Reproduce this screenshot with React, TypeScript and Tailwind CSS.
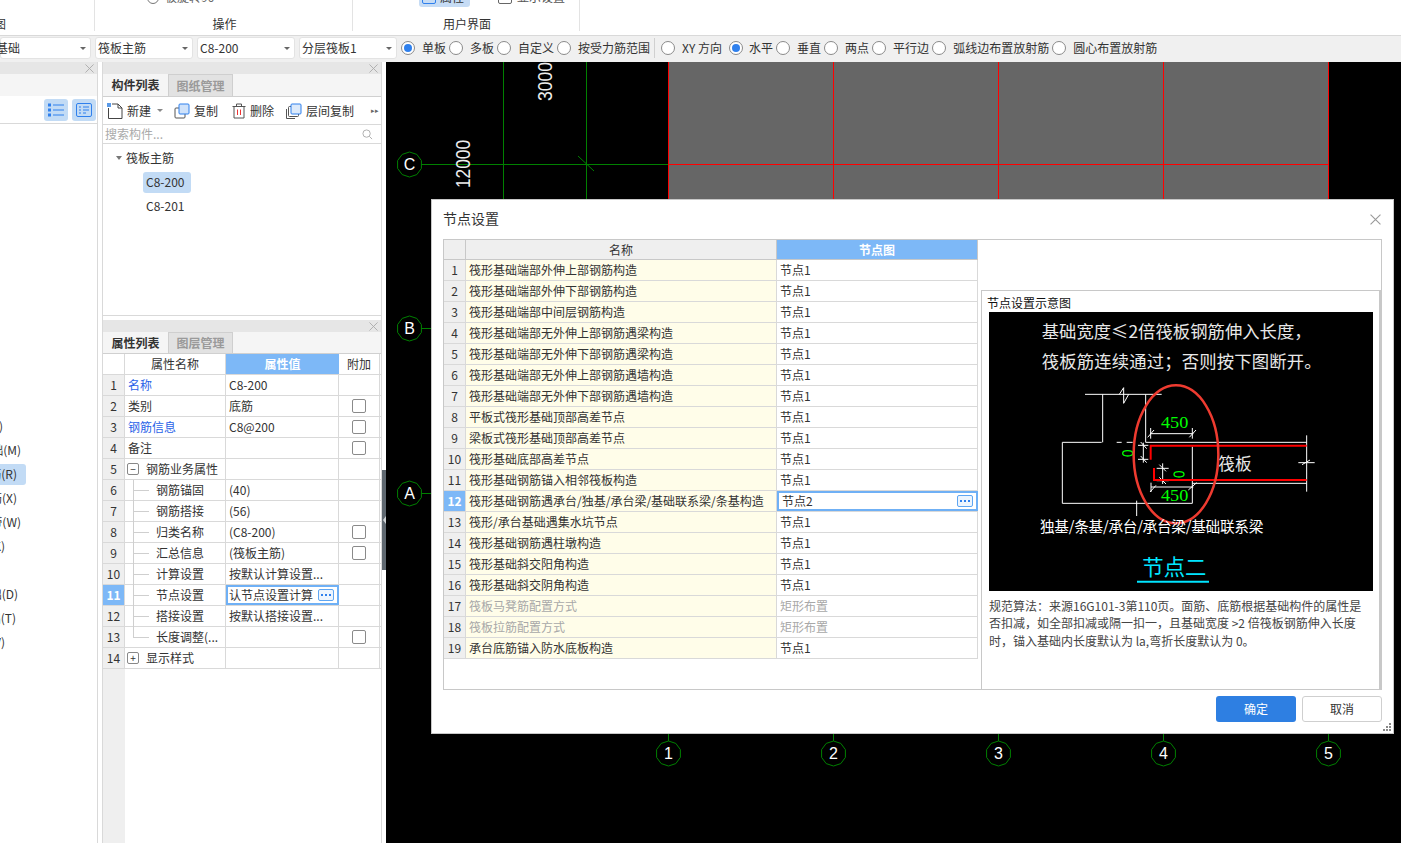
import React from "react";

function Radio({ on }: { on?: boolean }) {
  return (
    <span className="flex h-[14px] w-[14px] shrink-0 items-center justify-center rounded-full border border-[#8a8a8a] bg-white">
      {on && <span className="h-[8px] w-[8px] rounded-full bg-[#2f80ed]" />}
    </span>
  );
}

function RadioItem({ label, on, className = "" }: { label: string; on?: boolean; className?: string }) {
  return (
    <div className="flex items-center gap-[7px]">
      <Radio on={on} />
      <span className={`whitespace-nowrap ${className}`}>{label}</span>
    </div>
  );
}

function Select({ label, className, labelClass = "" }: { label: string; className: string; labelClass?: string }) {
  return (
    <div className={`flex h-[22px] shrink-0 items-center justify-between rounded-[3px] border border-[#e3e3e3] bg-white px-[2px] ${className}`}>
      <span className={`whitespace-nowrap ${labelClass}`}>{label}</span>
      <span className="mr-[2px] h-0 w-0 border-x-[3px] border-t-[3px] border-x-transparent border-t-[#666]" />
    </div>
  );
}

function Dots() {
  return (
    <span className="flex h-[12px] w-[16px] shrink-0 items-center justify-center gap-[2px] rounded-[2px] border border-[#5fa6f2] bg-[#edf5fe]">
      <span className="h-[2px] w-[2px] bg-[#2f80ed]" />
      <span className="h-[2px] w-[2px] bg-[#2f80ed]" />
      <span className="h-[2px] w-[2px] bg-[#2f80ed]" />
    </span>
  );
}

function CloseX({ size = 9, color = "#aaa" }: { size?: number; color?: string }) {
  return (
    <svg width={size} height={size} viewBox="0 0 10 10" className="shrink-0">
      <path d="M0.5 0.5L9.5 9.5M9.5 0.5L0.5 9.5" stroke={color} strokeWidth="1" fill="none" />
    </svg>
  );
}

function PanelHeader() {
  return (
    <div className="flex h-[12px] shrink-0 items-center justify-end bg-[#e6e6e6] pr-[3px]">
      <CloseX />
    </div>
  );
}

function Tabs({ a, b, className }: { a: string; b: string; className: string }) {
  return (
    <div className={`flex shrink-0 border-b border-[#d0d0d0] bg-[#f5f5f5] ${className}`}>
      <div className="flex w-[65px] items-center justify-center font-bold text-[#333]">{a}</div>
      <div className="flex w-[65px] items-center justify-center border-x border-t border-[#cfcfcf] bg-[#e2e2e2] font-bold text-[#9a9a9a]">{b}</div>
    </div>
  );
}

function ToolBtn({ icon, label, className }: { icon: React.ReactNode; label: string; className: string }) {
  return (
    <div className={`flex items-center gap-[4px] ${className}`}>
      {icon}
      <span className="whitespace-nowrap">{label}</span>
    </div>
  );
}

const leftRows: { t: string; w: string; sel?: boolean }[] = [
  { t: "基础梁(F)", w: "w-[3px]" },
  { t: "筏板基础(M)", w: "w-[21px]" },
  { t: "筏板主筋(R)", w: "w-[17px]", sel: true },
  { t: "筏板负筋(X)", w: "w-[17px]" },
  { t: "基础板带(W)", w: "w-[21px]" },
  { t: "集水坑(K)", w: "w-[5px]" },
  { t: "", w: "w-0" },
  { t: "独立基础(D)", w: "w-[18px]" },
  { t: "条形基础(T)", w: "w-[16px]" },
  { t: "桩承台(V)", w: "w-[5px]" },
];

type P = { name: string; val?: string; blue?: boolean; chk?: boolean; tree?: "mid" | "last"; box?: "-" | "+"; active?: boolean };
const props: P[] = [
  { name: "名称", val: "C8-200", blue: true },
  { name: "类别", val: "底筋", chk: true },
  { name: "钢筋信息", val: "C8@200", blue: true, chk: true },
  { name: "备注", chk: true },
  { name: "钢筋业务属性", box: "-" },
  { name: "钢筋锚固", val: "(40)", tree: "mid" },
  { name: "钢筋搭接", val: "(56)", tree: "mid" },
  { name: "归类名称", val: "(C8-200)", tree: "mid", chk: true },
  { name: "汇总信息", val: "(筏板主筋)", tree: "mid", chk: true },
  { name: "计算设置", val: "按默认计算设置...", tree: "mid" },
  { name: "节点设置", val: "认节点设置计算", tree: "mid", active: true },
  { name: "搭接设置", val: "按默认搭接设置...", tree: "mid" },
  { name: "长度调整(...", tree: "last", chk: true },
  { name: "显示样式", box: "+" },
];

function PropRow({ p, i }: { p: P; i: number }) {
  return (
    <div className="flex h-[21px] shrink-0 border-b border-[#d9d9d9]">
      <div className={`flex w-[22px] shrink-0 items-center justify-center border-r border-[#d9d9d9] ${p.active ? "bg-[#7db8f7] font-bold text-white" : "bg-[#efefef]"}`}>{i + 1}</div>
      <div className="relative flex w-[101px] shrink-0 items-center border-r border-[#d9d9d9]">
        {p.tree && (
          <>
            <span className={`absolute left-[8px] top-0 w-px bg-[#cfcfcf] ${p.tree === "last" ? "h-[10px]" : "h-[21px]"}`} />
            <span className="absolute left-[8px] top-[10px] h-px w-[16px] bg-[#cfcfcf]" />
          </>
        )}
        {p.box && (
          <span className="ml-[2px] mr-[7px] flex h-[12px] w-[12px] items-center justify-center rounded-[2px] border border-[#888] text-[10px] leading-none">{p.box === "-" ? "−" : "+"}</span>
        )}
        <span className={`whitespace-nowrap ${p.tree ? "pl-[31px]" : p.box ? "" : "pl-[3px]"} ${p.blue ? "text-[#2a63e8]" : ""}`}>{p.name}</span>
      </div>
      {p.active ? (
        <div className="flex w-[113px] shrink-0 items-center justify-between border-2 border-[#6fb0f5] pl-[1px] pr-[3px]">
          <span className="whitespace-nowrap">{p.val}</span>
          <Dots />
        </div>
      ) : (
        <div className="flex w-[113px] shrink-0 items-center overflow-hidden whitespace-nowrap border-r border-[#d9d9d9] pl-[3px]">{p.val}</div>
      )}
      <div className="flex w-[41px] shrink-0 items-center justify-center border-r border-[#d9d9d9]">
        {p.chk && <span className="h-[14px] w-[14px] rounded-[2px] border border-[#8a8a8a] bg-white" />}
      </div>
    </div>
  );
}

const nodes: { n: string; v: string; off?: boolean; active?: boolean }[] = [
  { n: "筏形基础端部外伸上部钢筋构造", v: "节点1" },
  { n: "筏形基础端部外伸下部钢筋构造", v: "节点1" },
  { n: "筏形基础端部中间层钢筋构造", v: "节点1" },
  { n: "筏形基础端部无外伸上部钢筋遇梁构造", v: "节点1" },
  { n: "筏形基础端部无外伸下部钢筋遇梁构造", v: "节点1" },
  { n: "筏形基础端部无外伸上部钢筋遇墙构造", v: "节点1" },
  { n: "筏形基础端部无外伸下部钢筋遇墙构造", v: "节点1" },
  { n: "平板式筏形基础顶部高差节点", v: "节点1" },
  { n: "梁板式筏形基础顶部高差节点", v: "节点1" },
  { n: "筏形基础底部高差节点", v: "节点1" },
  { n: "筏形基础钢筋锚入相邻筏板构造", v: "节点1" },
  { n: "筏形基础钢筋遇承台/独基/承台梁/基础联系梁/条基构造", v: "节点2", active: true },
  { n: "筏形/承台基础遇集水坑节点", v: "节点1" },
  { n: "筏形基础钢筋遇柱墩构造", v: "节点1" },
  { n: "筏形基础斜交阳角构造", v: "节点1" },
  { n: "筏形基础斜交阴角构造", v: "节点1" },
  { n: "筏板马凳筋配置方式", v: "矩形布置", off: true },
  { n: "筏板拉筋配置方式", v: "矩形布置", off: true },
  { n: "承台底筋锚入防水底板构造", v: "节点1" },
];

function Axis({ x, y, t }: { x: number; y: number; t: string }) {
  const pts = Array.from({ length: 10 }, (_, i) => {
    const a = (i / 10) * Math.PI * 2 + Math.PI / 10;
    return `${(x + 0.5 + 12.5 * Math.cos(a)).toFixed(1)},${(y + 0.5 + 12.5 * Math.sin(a)).toFixed(1)}`;
  }).join(" ");
  return (
    <g>
      <polygon points={pts} fill="none" stroke="#008000" strokeWidth="1" />
      <text x={x + 0.5} y={y + 6} textAnchor="middle" fill="#fff" fontSize="16" fontFamily="Liberation Sans, sans-serif">{t}</text>
    </g>
  );
}

function Canvas() {
  const reds = [668, 833, 998, 1163, 1328];
  return (
    <svg width="1015" height="781" viewBox="386 62 1015 781" className="block">
      <rect x="386" y="62" width="1015" height="781" fill="#000" />
      <rect x="668" y="62" width="660" height="440" fill="#666" />
      {[164, 328, 493].map((y) => (
        <rect key={y} x="421" y={y} width="247" height="1" fill="#008000" />
      ))}
      {[503, 586].map((x) => (
        <rect key={x} x={x} y="62" width="1" height="440" fill="#008000" />
      ))}
      <line x1="578" y1="156" x2="594" y2="171" stroke="#008000" />
      {reds.map((x) => (
        <rect key={x} x={x} y="62" width="1" height="440" fill="#f00" />
      ))}
      <rect x="668" y="164" width="660" height="1" fill="#f00" />
      <text transform="translate(552 101) rotate(-90)" fill="#eee" fontSize="20" textLength="39" lengthAdjust="spacingAndGlyphs" fontFamily="Liberation Sans, sans-serif">3000</text>
      <text transform="translate(470 188) rotate(-90)" fill="#eee" fontSize="20" textLength="48" lengthAdjust="spacingAndGlyphs" fontFamily="Liberation Sans, sans-serif">12000</text>
      <Axis x={409} y={164} t="C" />
      <Axis x={409} y={328} t="B" />
      <Axis x={409} y={493} t="A" />
      {reds.map((x, i) => (
        <g key={x}>
          <rect x={x} y="734" width="1" height="7" fill="#008000" />
          <Axis x={x} y={753} t={String(i + 1)} />
        </g>
      ))}
    </svg>
  );
}

function Diagram() {
  const cad = "Noto Sans CJK SC, sans-serif";
  const whites = [
    "M315 313H545",
    "M418 313L431 293V340L446 313",
    "M368 313V457",
    "M497 313V457",
    "M247 457H365M410 457H425M440 457H458M497 457H980",
    "M247 457V640H637V470",
    "M980 436V605",
    "M637 580H980",
    "M470 632V678",
    "M512 414V446M637 414V446M510 431H640M503 442L522 420M628 442L648 420",
    "M490 458V518M474 466H505M474 508H505M482 456L500 476M482 498L500 518",
    "M548 520V582M530 535H566M530 572H566M538 524L558 544M538 562L558 582",
    "M513 591H640M513 578V606M510 606L528 586M625 600L650 578",
    "M955 518H1004M966 524L990 510",
  ];
  return (
    <svg width="384" height="279" viewBox="27 66 1152 837" className="block shrink-0">
      <rect x="27" y="66" width="1152" height="837" fill="#000" />
      <text x="185" y="145" fill="#e8e8e8" fontSize="52" fontFamily={cad} textLength="810">{"基础宽度≤2倍筏板钢筋伸入长度\uFF0C"}</text>
      <text x="185" y="235" fill="#e8e8e8" fontSize="52" fontFamily={cad} textLength="840">{"筏板筋连续通过\uFF1B否则按下图断开。"}</text>
      {whites.map((d, i) => (
        <path key={i} d={d} stroke="#fff" strokeWidth="3" fill="none" />
      ))}
      <path d="M980 467H512V509M980 570H522V534" stroke="#f00" strokeWidth="6" fill="none" />
      <text x="543" y="413" fill="#0f0" fontSize="48" fontFamily="Liberation Serif, serif" textLength="82" lengthAdjust="spacingAndGlyphs">450</text>
      <text x="543" y="632" fill="#0f0" fontSize="48" fontFamily="Liberation Serif, serif" textLength="82" lengthAdjust="spacingAndGlyphs">450</text>
      <ellipse cx="443" cy="490" rx="15" ry="8" fill="none" stroke="#0f0" strokeWidth="4" />
      <ellipse cx="597" cy="553" rx="15" ry="8" fill="none" stroke="#0f0" strokeWidth="4" />
      <text x="715" y="540" fill="#e8e8e8" fontSize="50" fontFamily={cad}>筏板</text>
      <ellipse cx="588" cy="493" rx="127" ry="207" fill="none" stroke="#ee3b30" strokeWidth="7.5" />
      <text x="180" y="725" fill="#fff" fontSize="44" fontFamily={cad} textLength="670">独基/条基/承台/承台梁/基础联系梁</text>
      <text x="487" y="855" fill="#00e5ff" fontSize="64" fontFamily={cad} textLength="192">节点二</text>
      <line x1="471" x2="687" y1="875" y2="875" stroke="#00e5ff" strokeWidth="6" />
    </svg>
  );
}

function NodeDialog() {
  return (
    <div className="absolute left-[431px] top-[199px] flex h-[535px] w-[963px] flex-col border border-[#c8c8c8] bg-white">
      <div className="flex h-[39px] shrink-0 items-center justify-between pl-[11px] pr-[12px]">
        <span className="mb-[3px] text-[14px] text-[#333]">节点设置</span>
        <CloseX size={11} color="#999" />
      </div>
      <div className="ml-[11px] flex h-[451px] w-[939px] shrink-0 border border-[#c8c8c8]">
        <div className="w-[534px] shrink-0">
          <div className="flex h-[20px] border-b border-[#c8c8c8]">
            <div className="w-[22px] shrink-0 border-r border-[#c8c8c8] bg-[#efefef]" />
            <div className="flex w-[311px] shrink-0 items-center justify-center border-r border-[#c8c8c8] bg-[#efefef]">名称</div>
            <div className="flex w-[201px] shrink-0 items-center justify-center border-r border-[#c8c8c8] bg-[#7db8f7] font-bold text-white">节点图</div>
          </div>
          {nodes.map((r, i) => (
            <div key={i} className={`flex h-[21px] border-b border-[#d9d9d9] ${r.off ? "text-[#a8a8a8]" : ""}`}>
              <div className={`flex w-[22px] shrink-0 items-center justify-center border-r border-[#d9d9d9] ${r.active ? "bg-[#7db8f7] font-bold text-white" : "bg-[#efefef] text-[#333]"}`}>{i + 1}</div>
              <div className="flex w-[311px] shrink-0 items-center whitespace-nowrap border-r border-[#d9d9d9] bg-[#fffde9] pl-[3px]">{r.n}</div>
              {r.active ? (
                <div className="flex w-[201px] shrink-0 items-center justify-between border-2 border-[#6fb0f5] pl-[3px] pr-[3px]">
                  <span>{r.v}</span>
                  <Dots />
                </div>
              ) : (
                <div className="flex w-[201px] shrink-0 items-center border-r border-[#d9d9d9] pl-[3px]">{r.v}</div>
              )}
            </div>
          ))}
        </div>
        <div className="flex min-w-0 flex-1 flex-col pl-[3px]">
          <div className="h-[50px] shrink-0" />
          <div className="flex flex-1 flex-col border-l border-t border-r-2 border-[#c8c8c8] pl-[7px]">
            <div className="-ml-[2px] flex h-[21px] shrink-0 items-center pt-[2px] text-[#111]">节点设置示意图</div>
            <Diagram />
            <div className="mt-[6px] leading-[17.3px] text-[#444]">
              <div className="whitespace-nowrap">{"规范算法\uFF1A来源16G101-3第110页。面筋、底筋根据基础构件的属性是"}</div>
              <div className="whitespace-nowrap">{"否扣减\uFF0C如全部扣减或隔一扣一\uFF0C且基础宽度 >2 倍筏板钢筋伸入长度"}</div>
              <div className="whitespace-nowrap">{"时\uFF0C锚入基础内长度默认为 la,弯折长度默认为 0。"}</div>
            </div>
          </div>
        </div>
      </div>
      <div className="relative mt-[6px] flex justify-end gap-[6px] pr-[11px]">
        <button className="h-[26px] w-[80px] rounded-[3px] bg-[#2e7fe2] text-white">确定</button>
        <button className="h-[26px] w-[80px] rounded-[3px] border border-[#cfcfcf] bg-white text-[#333]">取消</button>
      </div>
      <svg width="8" height="8" viewBox="0 0 8 8" className="absolute bottom-[2px] right-[2px]">
        <rect x="6" y="0" width="2" height="2" fill="#888" />
        <rect x="3" y="3" width="2" height="2" fill="#888" />
        <rect x="6" y="3" width="2" height="2" fill="#888" />
        <rect x="0" y="6" width="2" height="2" fill="#888" />
        <rect x="3" y="6" width="2" height="2" fill="#888" />
        <rect x="6" y="6" width="2" height="2" fill="#888" />
      </svg>
    </div>
  );
}

const iNew = (
  <svg width="16" height="16" viewBox="0 0 16 16" className="shrink-0">
    <path d="M1.5 5V15.5H15V5L11 1H5" fill="none" stroke="#444" />
    <path d="M11 1V5H15" fill="none" stroke="#444" />
    <rect x="0" y="0" width="4" height="4" fill="#5b9be8" />
  </svg>
);
const iCopy = (
  <svg width="16" height="16" viewBox="0 0 16 16" className="shrink-0">
    <rect x="1" y="5" width="10" height="10" rx="1" fill="#fff" stroke="#555" />
    <rect x="5" y="1" width="10" height="10" rx="1" fill="#cfe2fa" stroke="#2f80ed" />
  </svg>
);
const iDel = (
  <svg width="14" height="16" viewBox="0 0 14 16" className="shrink-0">
    <path d="M0.5 3.5H13.5M4.5 3.5V1H9.5V3.5" fill="none" stroke="#555" />
    <path d="M2 3.5V15H12V3.5" fill="none" stroke="#555" />
    <path d="M5.5 6.5V12M8.5 6.5V12" stroke="#e33" />
  </svg>
);
const iFloor = (
  <svg width="16" height="16" viewBox="0 0 16 16" className="shrink-0">
    <path d="M0.5 6V15.5H9" fill="none" stroke="#555" />
    <rect x="2.5" y="3.5" width="10" height="10" rx="1" fill="#fff" stroke="#555" />
    <rect x="5" y="1" width="10" height="10" rx="1" fill="#dceafb" stroke="#2f80ed" />
  </svg>
);

export default function App() {
  return (
    <div className="relative flex h-[843px] w-[1401px] flex-col overflow-hidden bg-white font-['Noto_Sans_CJK_SC',sans-serif] text-[12px] leading-none text-[#333]">
      {/* ribbon */}
      <div className="flex h-[36px] shrink-0 overflow-hidden border-b border-[#d9d9d9]">
        <div className="flex h-[31px] w-[95px] shrink-0 items-end border-r border-[#e3e3e3] pb-[1px]">
          <span className="-ml-[18px] text-[12px]">视图</span>
        </div>
        <div className="flex h-[31px] w-[258px] shrink-0 flex-col border-r border-[#e3e3e3]">
          <div className="flex h-[4px] items-end gap-[6px] pl-[52px]">
            <span className="h-[14px] w-[12px] shrink-0 rounded-full border border-[#777]" />
            <span className="shrink-0 whitespace-nowrap leading-[14px] text-[#666]">板旋转90</span>
          </div>
          <div className="mt-auto pb-[1px] pl-[2px] text-center">操作</div>
        </div>
        <div className="flex h-[31px] w-[227px] shrink-0 flex-col border-r border-[#e3e3e3]">
          <div className="flex h-[7px] items-end pl-[66px]">
            <div className="flex h-[20px] w-[51px] shrink-0 items-center gap-[4px] rounded-[3px] bg-[#c6dcf5] pl-[3px]">
              <span className="h-[14px] w-[14px] shrink-0 rounded-[2px] border border-[#2f80ed]" />
              <span>属性</span>
            </div>
            <div className="ml-[28px] flex h-[21px] shrink-0 items-center gap-[5px]">
              <span className="h-[14px] w-[14px] shrink-0 rounded-[2px] border border-[#666]" />
              <span className="whitespace-nowrap text-[#555]">显示设置</span>
            </div>
          </div>
          <div className="mt-auto pb-[1px] pl-[2px] text-center">用户界面</div>
        </div>
      </div>
      {/* options bar */}
      <div className="flex h-[26px] shrink-0 items-center bg-[#f0f0f0] pb-[2px]">
        <Select label="基础" className="w-[91px]" labelClass="-ml-[7px]" />
        <Select label="筏板主筋" className="ml-[4px] w-[98px]" />
        <Select label="C8-200" className="ml-[4px] w-[98px]" />
        <Select label="分层筏板1" className="ml-[4px] w-[98px]" />
        <div className="ml-[4px] flex items-center gap-[3px]">
          <RadioItem on label="单板" />
          <RadioItem label="多板" />
          <RadioItem label="自定义" />
          <RadioItem label="按受力筋范围" />
          <span className="ml-[1px] mr-[3px] h-[20px] w-px bg-[#d0d0d0]" />
          <RadioItem label="XY 方向" className="w-[44px]" />
          <RadioItem on label="水平" className="-ml-[1px]" />
          <RadioItem label="垂直" />
          <RadioItem label="两点" />
          <RadioItem label="平行边" />
          <RadioItem label="弧线边布置放射筋" />
          <RadioItem label="圆心布置放射筋" />
        </div>
      </div>
      {/* main */}
      <div className="flex min-h-0 flex-1">
        <div className="flex w-[98px] shrink-0 flex-col border-r border-[#d9d9d9]">
          <PanelHeader />
          <div className="h-[22px] bg-[#f5f5f5]" />
          <div className="flex h-[28px] items-center justify-end gap-[4px] border-b border-[#d9d9d9] pr-[1px]">
            <span className="flex h-[22px] w-[24px] items-center justify-center rounded-[3px] bg-[#c2dbf5]">
              <svg width="16" height="14" viewBox="0 0 16 14">
                <path d="M5 2H16M5 7H16M5 12H16" stroke="#2f80ed" />
                <rect x="0.5" y="1" width="2" height="2" fill="none" stroke="#2f80ed" />
                <rect x="0.5" y="6" width="2" height="2" fill="none" stroke="#2f80ed" />
                <rect x="0.5" y="11" width="2" height="2" fill="none" stroke="#2f80ed" />
              </svg>
            </span>
            <span className="flex h-[22px] w-[24px] items-center justify-center rounded-[3px] bg-[#c2dbf5]">
              <svg width="16" height="16" viewBox="0 0 16 16">
                <rect x="0.5" y="1.5" width="15" height="13" rx="1.5" fill="none" stroke="#2f80ed" />
                <path d="M3 5H5M7 5H13M3 8H5M7 8H13M3 11H5M7 11H10" stroke="#2f80ed" />
              </svg>
            </span>
          </div>
          <div className="mt-[290px] flex flex-col">
            {leftRows.map((r, i) => (
              <div key={i} className="relative flex h-[24px] items-center">
                {r.sel && <span className="absolute left-0 top-[2px] h-[21px] w-[26px] rounded-r-[3px] bg-[#c2dbf5]" />}
                <div className={`relative flex justify-end ${r.w}`}>
                  <span className="shrink-0 whitespace-nowrap">{r.t}</span>
                </div>
              </div>
            ))}
          </div>
        </div>
        <div className="ml-[4px] flex w-[280px] shrink-0 flex-col border-x border-[#d9d9d9]">
          <div className="flex h-[254px] shrink-0 flex-col border-b border-[#d9d9d9]">
            <PanelHeader />
            <Tabs a="构件列表" b="图纸管理" className="h-[23px]" />
            <div className="relative flex h-[28px] shrink-0 items-center border-b border-[#d9d9d9] pl-[4px]">
              <ToolBtn icon={iNew} label="新建" className="" />
              <span className="ml-[6px] h-0 w-0 border-x-[3px] border-t-[3px] border-x-transparent border-t-[#888]" />
              <ToolBtn icon={iCopy} label="复制" className="ml-[11px]" />
              <ToolBtn icon={iDel} label="删除" className="ml-[14px]" />
              <ToolBtn icon={iFloor} label="层间复制" className="ml-[12px]" />
              <span className="ml-[16px] flex h-[20px] w-[10px] items-center justify-center text-[7px] text-[#666]">▸▸</span>
            </div>
            <div className="flex h-[19px] shrink-0 items-center justify-between border-b border-[#d9d9d9] pl-[2px] pr-[8px] text-[#aaa]">
              <span>搜索构件...</span>
              <svg width="11" height="11" viewBox="0 0 12 12">
                <circle cx="5" cy="5" r="4" fill="none" stroke="#aaa" />
                <path d="M8 8L11 11" stroke="#aaa" />
              </svg>
            </div>
            <div className="flex flex-col pt-[2px]">
              <div className="flex h-[24px] items-center pl-[13px]">
                <span className="h-0 w-0 border-x-[3.5px] border-t-[4px] border-x-transparent border-t-[#777]" />
                <span className="ml-[4px]">筏板主筋</span>
              </div>
              <div className="flex h-[24px] items-center pl-[40px]">
                <span className="flex h-[21px] w-[48px] items-center rounded-[3px] bg-[#c2dbf5] pl-[3px]">C8-200</span>
              </div>
              <div className="flex h-[24px] items-center pl-[43px]">C8-201</div>
            </div>
          </div>
          <div className="mt-[4px] flex min-h-0 flex-1 flex-col">
            <PanelHeader />
            <Tabs a="属性列表" b="图层管理" className="h-[22px]" />
            <div className="flex h-[21px] shrink-0 border-b border-[#d9d9d9]">
              <div className="w-[22px] shrink-0 border-r border-[#d9d9d9]" />
              <div className="flex w-[101px] shrink-0 items-center justify-center border-r border-[#d9d9d9]">属性名称</div>
              <div className="flex w-[113px] shrink-0 items-center justify-center bg-[#7db8f7] font-bold text-white">属性值</div>
              <div className="flex w-[41px] shrink-0 items-center justify-center border-r border-[#d9d9d9]">附加</div>
            </div>
            {props.map((p, i) => (
              <PropRow key={i} p={p} i={i} />
            ))}
            <div className="flex min-h-0 flex-1">
              <div className="w-[22px] bg-[#efefef]" />
            </div>
          </div>
        </div>
        <div className="relative w-[4px] shrink-0">
          <div className="absolute left-0 top-[408px] flex h-[100px] w-[4px] items-center justify-center bg-[#5f6870]">
            <span className="h-0 w-0 border-y-[4px] border-r-[3px] border-y-transparent border-r-[#cfd3d6]" />
          </div>
        </div>
        <div className="min-w-0 flex-1 bg-black">
          <Canvas />
        </div>
      </div>
      <NodeDialog />
    </div>
  );
}
